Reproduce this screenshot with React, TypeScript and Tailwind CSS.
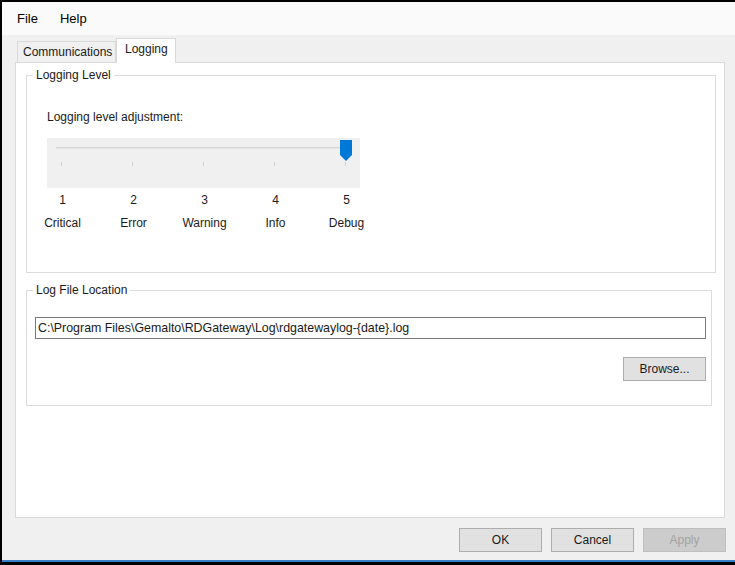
import React, { useState } from 'react';

const levels = [
    { value: 1, name: 'Critical' },
    { value: 2, name: 'Error' },
    { value: 3, name: 'Warning' },
    { value: 4, name: 'Info' },
    { value: 5, name: 'Debug' },
];

const font = { fontFamily: '"Liberation Sans", Arial, sans-serif' };

const Button = ({ label, disabled = false, className = '' }: { label: string; disabled?: boolean; className?: string }) => (
    <button
        disabled={disabled}
        className={
            'h-[24px] w-[83px] border text-[12px] ' +
            (disabled
                ? 'bg-[#cccccc] border-[#bfbfbf] text-[#a3a3a3]'
                : 'bg-[#e1e1e1] border-[#adadad] text-[#1a1a1a]') +
            ' ' + className
        }
    >
        {label}
    </button>
);

const App = () => {
    const [level, setLevel] = useState(5);
    const [tab, setTab] = useState('logging');
    const [path, setPath] = useState('C:\\Program Files\\Gemalto\\RDGateway\\Log\\rdgatewaylog-{date}.log');

    return (
        <div className="w-[735px] h-[565px] bg-black pt-[2px] pl-[2px] pb-[3px] overflow-hidden" style={font}>
            <div className="flex flex-col h-full bg-[#f0f0f0] text-[12px] text-[#1a1a1a]">
                {/* Menu bar */}
                <div className="h-[33px] bg-[#fafafa] flex items-center gap-[22px] pl-[15px] text-[13px] text-black">
                    <span>File</span>
                    <span>Help</span>
                </div>

                {/* Tabs */}
                <div className="h-[27px] flex items-end pl-[15px] relative z-10">
                    <button
                        onClick={() => setTab('comm')}
                        className={'h-[21px] w-[99px] border border-b-0 border-[#d9d9d9] text-left pl-[5px] ' + (tab === 'comm' ? 'bg-white' : 'bg-[#f0f0f0]')}
                    >
                        Communications
                    </button>
                    <button
                        onClick={() => setTab('logging')}
                        className="h-[25px] w-[60px] -mb-[1px] border border-b-0 border-[#d9d9d9] bg-white text-left pl-[8px] pb-[5px]"
                    >
                        Logging
                    </button>
                </div>

                {/* Tab page */}
                <div className="ml-[13px] mr-[10px] h-[456px] bg-white border border-[#d9d9d9] pl-[10px] pt-[5px]">
                    <fieldset className="w-[690px] h-[205px] border border-[#dcdcdc] pl-0">
                        <legend className="ml-[6px] px-[3px] leading-[14px]">Logging Level</legend>
                        <div className="pl-[20px] mt-[28px] leading-[14px]">Logging level adjustment:</div>

                        {/* Slider */}
                        <div className="ml-[20px] mt-[14px] w-[313px] h-[50px] bg-[#f0f0f0] relative">
                            <div className="absolute left-[9px] right-[15px] top-[9px] h-[2px] bg-[#d6d6d6] border-b border-[#e7e7e7]" />
                            {levels.map((l, i) => (
                                <div
                                    key={l.value}
                                    onClick={() => setLevel(l.value)}
                                    className="absolute top-[24px] w-[1px] h-[4px] bg-[#cfcfcf]"
                                    style={{ left: 14 + i * 71 }}
                                />
                            ))}
                            <svg
                                className="absolute top-[2px]"
                                style={{ left: 9 + (level - 1) * 71 }}
                                width="12"
                                height="21"
                                viewBox="0 0 12 21"
                            >
                                <path d="M0 0 H12 V15 L6 21 L0 15 Z" fill="#0078d7" />
                            </svg>
                        </div>

                        <div className="flex mt-[5px] leading-[14px]">
                            {levels.map((l) => (
                                <div key={l.value} className="w-[71px] text-center">{l.value}</div>
                            ))}
                        </div>
                        <div className="flex mt-[9px] leading-[14px]">
                            {levels.map((l) => (
                                <div key={l.value} className="w-[71px] text-center">{l.name}</div>
                            ))}
                        </div>
                    </fieldset>

                    <fieldset className="w-[686px] h-[123px] mt-[10px] border border-[#dcdcdc] pl-[8px]">
                        <legend className="ml-[-2px] px-[3px] leading-[14px]">Log File Location</legend>
                        <input
                            value={path}
                            onChange={(e) => setPath(e.target.value)}
                            className="mt-[20px] w-[671px] h-[22px] border border-[#7a7a7a] px-[2px] outline-none text-[12.4px]"
                        />
                        <div className="flex justify-end w-[671px] mt-[18px]">
                            <Button label="Browse..." />
                        </div>
                    </fieldset>
                </div>

                {/* Dialog buttons */}
                <div className="flex justify-end gap-[9px] pr-[9px] pt-[10px] flex-1">
                    <Button label="OK" />
                    <Button label="Cancel" />
                    <Button label="Apply" disabled />
                </div>
                <div className="h-[2px] bg-[#3a80c8]" />
            </div>
        </div>
    );
};

export default App;
